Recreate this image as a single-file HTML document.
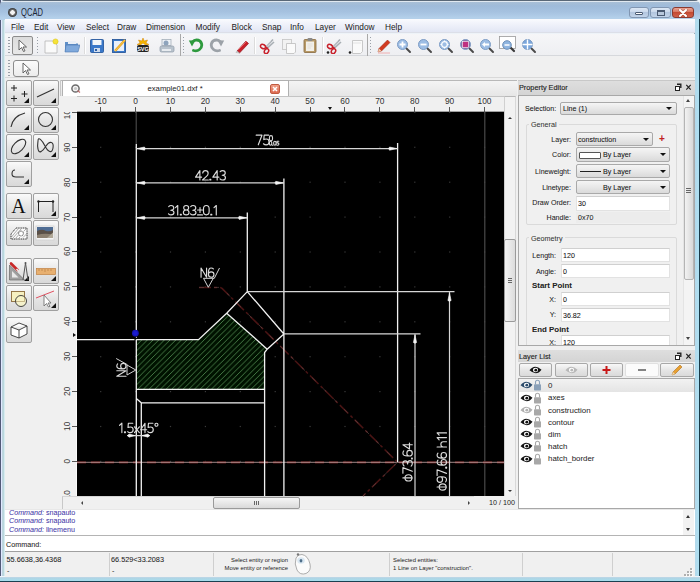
<!DOCTYPE html>
<html><head><meta charset="utf-8"><style>
*{margin:0;padding:0;box-sizing:border-box}
html,body{width:700px;height:582px;overflow:hidden;background:#bcd3ec;font-family:"Liberation Sans",sans-serif;color:#000}
.a{position:absolute}
.t{position:absolute;white-space:nowrap;line-height:1}
.mi{position:absolute;top:22.5px;font-size:8.3px;color:#1a1a1a;line-height:1;white-space:nowrap}
.btn{position:absolute;width:26px;height:26px;border:1px solid #a0a0a0;border-radius:2px;background:linear-gradient(#fafafa,#e4e4e4 55%,#d9d9d9)}
.btn i{position:absolute;right:2px;bottom:2px;width:0;height:0;border-left:5px solid transparent;border-bottom:5px solid #111}
.cb{position:absolute;border:1px solid #a9a9a9;border-radius:2px;background:linear-gradient(#f5f5f5,#e8e8e8 50%,#dadada)}
.cb b{position:absolute;right:3.5px;top:5px;width:0;height:0;border-left:3px solid transparent;border-right:3px solid transparent;border-top:3px solid #111}
.inp{position:absolute;background:#fff;border:1px solid #e2e2e2;border-top-color:#d0d0d0}
.lbl{position:absolute;font-size:7.1px;color:#111;line-height:1;white-space:nowrap;margin-top:0.7px;-webkit-text-stroke:0.05px currentColor}
</style></head><body>
<div class="a" style="left:0;top:0;width:700px;height:582px;background:linear-gradient(90deg,#525a78 0 1px,#e0e8ff 1px 2px,#c0d4e0 2px,#b8d8dc 4px,#d8ecf0 4.5px,#eef3f8 5.5px)"></div>
<div class="a" style="left:0;top:0;width:700px;height:20px;background:linear-gradient(#5a6878 0 1px,#e0e8f0 1px 2px,#a9bfd6 2px,#9fbbda 6px,#a6c2e0 12px,#b4d0ea 18px);border-radius:5px 5px 0 0"></div>
<div class="a" style="left:694px;top:19px;width:6px;height:563px;background:linear-gradient(90deg,#9aaab8 0 1px,#b4d8ea 1px,#aee0f2 4.5px,#1a3a48 5px)"></div>
<div class="a" style="left:0;top:576px;width:700px;height:6px;background:linear-gradient(#eef4fa 0 0.5px,#c4d8e8 1px,#b0d4e4 2px,#a8dcec 4.5px,#1a4050 5px)"></div>
<div class="a" style="left:8px;top:8px;width:9px;height:9px;border-radius:50%;background:radial-gradient(circle at 50% 50%,#f4f4f4 0 2px,#7a7a7a 2.5px,#303030 4.5px)"></div>
<div class="t" style="left:21px;top:7.5px;font-size:10px;color:#1b2433;transform:scaleX(0.76);transform-origin:0 0">QCAD</div>
<div class="a" style="left:628.5px;top:7px;width:20px;height:11px;border:1px solid #8196b2;border-radius:3px;background:linear-gradient(#dce7f4,#c9d8ec 45%,#b3c6df 50%,#c2d4ea)"></div>
<div class="a" style="left:634.5px;top:12px;width:8px;height:3px;background:#fff;border:1px solid #4a5a72;border-radius:1px"></div>
<div class="a" style="left:650px;top:7px;width:20.5px;height:11px;border:1px solid #8196b2;border-radius:3px;background:linear-gradient(#dce7f4,#c9d8ec 45%,#b3c6df 50%,#c2d4ea)"></div>
<div class="a" style="left:656.5px;top:9.5px;width:8px;height:6px;border:1px solid #4a5a72;border-top-width:2px;background:#fff;box-shadow:inset 0 0 0 1px #fff"></div>
<div class="a" style="left:657.5px;top:11.5px;width:6px;height:3px;background:#b8c8dc"></div>
<div class="a" style="left:672px;top:7px;width:21.5px;height:11px;border:1px solid #8a3a30;border-radius:3px;background:linear-gradient(#eaa494,#d7735e 45%,#c44a32 50%,#d0604a)"></div>
<svg class="a" style="left:678px;top:8.5px" width="10" height="8" viewBox="0 0 10 8"><path d="M2 1 L8 7 M8 1 L2 7" stroke="#4a1810" stroke-width="3" stroke-linecap="round" opacity="0.35"/><path d="M2 1 L8 7 M8 1 L2 7" stroke="#fff" stroke-width="2" stroke-linecap="round"/></svg>
<div class="a" style="left:5px;top:19px;width:690px;height:14px;background:linear-gradient(#fafbfe,#f2f4fb 30%,#e2e6f4);border-bottom:1px solid #dcdfe8"></div>
<div class="mi" style="left:11px">File</div>
<div class="mi" style="left:34px">Edit</div>
<div class="mi" style="left:57px">View</div>
<div class="mi" style="left:86px">Select</div>
<div class="mi" style="left:117px">Draw</div>
<div class="mi" style="left:146px">Dimension</div>
<div class="mi" style="left:195.5px">Modify</div>
<div class="mi" style="left:231.5px">Block</div>
<div class="mi" style="left:262px">Snap</div>
<div class="mi" style="left:290px">Info</div>
<div class="mi" style="left:315px">Layer</div>
<div class="mi" style="left:345px">Window</div>
<div class="mi" style="left:385px">Help</div>
<div class="a" style="left:5px;top:34px;width:690px;height:22px;background:linear-gradient(#f6f6f8,#eeeff2);border-bottom:1px solid #d6d8dc"></div>
<div class="a" style="left:8px;top:37px;width:2px;height:17px;background:repeating-linear-gradient(#9aa0a8 0 1px,transparent 1px 3px)"></div>
<div class="a" style="left:12px;top:36px;width:21px;height:19px;border:1px solid #8c8c8c;border-radius:2px;background:linear-gradient(#dcdcdc,#e8e8e8)"></div>
<svg class="a" style="left:17px;top:39px" width="12" height="14" viewBox="0 0 12 14"><path d="M2 1 L2 11 L4.5 8.5 L6.5 12.5 L8 11.8 L6 8 L9.5 8 Z" fill="#fff" stroke="#555" stroke-width="0.9"/></svg>
<div class="a" style="left:37px;top:37px;width:1px;height:17px;background:repeating-linear-gradient(#9aa0a8 0 1px,transparent 1px 3px)"></div>
<div class="a" style="left:84px;top:37px;width:1px;height:17px;background:#dcdcdc;box-shadow:1px 0 0 #fff"></div>
<div class="a" style="left:254px;top:37px;width:1px;height:17px;background:#dcdcdc;box-shadow:1px 0 0 #fff"></div>
<div class="a" style="left:322px;top:37px;width:1px;height:17px;background:#dcdcdc;box-shadow:1px 0 0 #fff"></div>
<div class="a" style="left:179.5px;top:34px;width:1px;height:22px;background:#a8a8a8"></div>
<div class="a" style="left:183.0px;top:37px;width:1px;height:17px;background:repeating-linear-gradient(#9aa0a8 0 1px,transparent 1px 3px)"></div>
<div class="a" style="left:366.5px;top:34px;width:1px;height:22px;background:#a8a8a8"></div>
<div class="a" style="left:370.0px;top:37px;width:1px;height:17px;background:repeating-linear-gradient(#9aa0a8 0 1px,transparent 1px 3px)"></div>
<div class="a" style="left:5px;top:56px;width:690px;height:22px;background:#f0f0f0;border-bottom:1px solid #d9d9d9"></div>
<div class="a" style="left:8px;top:60px;width:2px;height:17px;background:repeating-linear-gradient(#9aa0a8 0 1px,transparent 1px 3px)"></div>
<div class="a" style="left:13px;top:60px;width:26px;height:17px;border:1px solid #8c8c8c;border-radius:3px;background:linear-gradient(#fbfbfb,#ececec)"></div>
<svg class="a" style="left:21px;top:62px" width="12" height="14" viewBox="0 0 12 14"><path d="M2 1 L2 11 L4.5 8.5 L6.5 12.5 L8 11.8 L6 8 L9.5 8 Z" fill="#fff" stroke="#555" stroke-width="0.9"/></svg>
<div class="a" style="left:5px;top:78px;width:690px;height:473px;background:#f0f0f0"></div>
<svg class="a" style="left:43px;top:38px" width="16" height="16" viewBox="0 0 16 16"><path d="M2 3 H10 L14 7 V15 H2 Z" fill="#fafafa" stroke="#b5b5b5" stroke-width="0.8"/><circle cx="12.5" cy="3.5" r="2.6" fill="#f5e23a" stroke="#d8c010" stroke-width="0.5"/></svg>
<svg class="a" style="left:64px;top:38px" width="16" height="16" viewBox="0 0 16 16"><path d="M1 4 H6 L7.5 5.5 H14 V14 H1 Z" fill="#5f8fc8"/><path d="M2 7 H16 L14 14 H1 Z" fill="#7fa9dc" stroke="#4b77b0" stroke-width="0.6"/><path d="M4 3 H12 V6 H4Z" fill="#e8eef6"/></svg>
<svg class="a" style="left:89px;top:38px" width="16" height="16" viewBox="0 0 16 16"><rect x="1.5" y="1.5" width="13" height="13" rx="1" fill="#3a78c9" stroke="#1d4f95" stroke-width="0.8"/><rect x="3.5" y="2" width="9" height="5" fill="#f3f6fa"/><rect x="5" y="10" width="6" height="4" fill="#cfdcee"/><rect x="6" y="11" width="2" height="2" fill="#2b5ea6"/></svg>
<svg class="a" style="left:111px;top:38px" width="16" height="16" viewBox="0 0 16 16"><rect x="1.5" y="1.5" width="13" height="13" fill="#3a78c9" stroke="#1d4f95" stroke-width="0.8"/><rect x="3" y="3" width="10" height="10" fill="#e9f0fa"/><path d="M4 13 L14 2" stroke="#e8a020" stroke-width="2.4"/><path d="M4 13 L14 2" stroke="#f8d050" stroke-width="1"/></svg>
<svg class="a" style="left:135px;top:37px" width="16" height="16" viewBox="0 0 16 16"><path d="M8 1 L9.2 4 L12.5 3 L11 6 L14 7.5 L10.5 8 L8 6 L5.5 8 L2 7.5 L5 6 L3.5 3 L6.8 4Z" fill="#f4b400" stroke="#d08000" stroke-width="0.5"/><rect x="2" y="8" width="12" height="7" rx="2" fill="#222"/><text x="8" y="14" font-size="5.5" font-family="Liberation Sans" font-weight="bold" fill="#fff" text-anchor="middle">SVG</text></svg>
<svg class="a" style="left:159px;top:38px" width="16" height="16" viewBox="0 0 16 16"><rect x="3" y="1.5" width="9" height="6" fill="#eef2f6" stroke="#9aa6b2" stroke-width="0.7"/><circle cx="7" cy="5" r="2.5" fill="#8ea4bc"/><rect x="1" y="8" width="14" height="6" rx="1.5" fill="#b9c3cd" stroke="#8d99a6" stroke-width="0.7"/><rect x="3" y="11" width="9" height="2" fill="#e8ecf0"/></svg>
<svg class="a" style="left:188px;top:37px" width="16" height="16" viewBox="0 0 16 16"><path d="M5.5 13.5 Q9 14.5 11.5 12.5 Q14.5 10 13.5 6.5 Q12.5 3 8.5 3 Q6 3 4.5 5" fill="none" stroke="#2e9a3e" stroke-width="2.8" stroke-linecap="round"/><path d="M0.8 3.5 L7.5 3.2 L4 9.5Z" fill="#2e9a3e"/></svg>
<svg class="a" style="left:209px;top:37px" width="16" height="16" viewBox="0 0 16 16"><g transform="translate(16 0) scale(-1 1)"><path d="M5.5 13.5 Q9 14.5 11.5 12.5 Q14.5 10 13.5 6.5 Q12.5 3 8.5 3 Q6 3 4.5 5" fill="none" stroke="#9ca2a8" stroke-width="2.8" stroke-linecap="round"/><path d="M0.8 3.5 L7.5 3.2 L4 9.5Z" fill="#9ca2a8"/></g></svg>
<svg class="a" style="left:234px;top:38px" width="16" height="16" viewBox="0 0 16 16"><path d="M3 13 L12 3 L14.5 5.5 L5.5 15 Z" fill="#c8202a" stroke="#8a1018" stroke-width="0.6"/><path d="M2 14.5 L3 13 L5.5 15 Z" fill="#f0f0f0" stroke="#999" stroke-width="0.5"/><path d="M4.5 11.5 L13 3" stroke="#f07070" stroke-width="0.8"/></svg>
<svg class="a" style="left:259px;top:38px" width="16" height="16" viewBox="0 0 16 16"><path d="M7 9 L14 1.5 M8.5 10 L15 4" stroke="#a8aeb4" stroke-width="1.6"/><path d="M7 9 L12 3" stroke="#d0d4d8" stroke-width="0.6"/><ellipse cx="4" cy="8.5" rx="2.6" ry="2" transform="rotate(30 4 8.5)" fill="none" stroke="#c8202a" stroke-width="1.5"/><ellipse cx="7.5" cy="13.2" rx="2" ry="2.6" transform="rotate(30 7.5 13.2)" fill="none" stroke="#c8202a" stroke-width="1.5"/><path d="M6.3 9.3 L8 9.5 L8.3 11" fill="none" stroke="#c8202a" stroke-width="1.3"/></svg>
<svg class="a" style="left:281px;top:38px" width="16" height="16" viewBox="0 0 16 16"><rect x="1.5" y="1.5" width="9" height="10" fill="#f2f2f2" stroke="#c4c4c4" stroke-width="0.8"/><path d="M5.5 5.5 H14.5 V14 L13 15.5 H5.5 Z" fill="#fafafa" stroke="#bdbdbd" stroke-width="0.8"/></svg>
<svg class="a" style="left:302px;top:37px" width="16" height="16" viewBox="0 0 16 16"><rect x="2" y="2.5" width="12" height="13" rx="1" fill="#b89a68" stroke="#86683e" stroke-width="0.8"/><rect x="4" y="4.5" width="8" height="9.5" fill="#f2f0ea"/><path d="M5.5 7H10.5M5.5 9H10.5M5.5 11H9" stroke="#d8d4cc" stroke-width="0.6"/><rect x="5.5" y="1" width="5" height="3" rx="1" fill="#8a8a8a"/></svg>
<svg class="a" style="left:326px;top:38px" width="16" height="16" viewBox="0 0 16 16"><path d="M7 9 L14 1.5 M8.5 10 L15 4" stroke="#a8aeb4" stroke-width="1.6"/><path d="M7 9 L12 3" stroke="#d0d4d8" stroke-width="0.6"/><ellipse cx="4" cy="8.5" rx="2.6" ry="2" transform="rotate(30 4 8.5)" fill="none" stroke="#c8202a" stroke-width="1.5"/><ellipse cx="7.5" cy="13.2" rx="2" ry="2.6" transform="rotate(30 7.5 13.2)" fill="none" stroke="#c8202a" stroke-width="1.5"/><path d="M6.3 9.3 L8 9.5 L8.3 11" fill="none" stroke="#c8202a" stroke-width="1.3"/><circle cx="2" cy="14.5" r="1.3" fill="#222"/></svg>
<svg class="a" style="left:348px;top:38px" width="16" height="16" viewBox="0 0 16 16"><path d="M4.5 2.5 H14.5 V13.5 L12.5 15.5 H4.5 Z" fill="#fafafa" stroke="#bdbdbd" stroke-width="0.8"/><path d="M5 5 H13" stroke="#e2e2e2"/><circle cx="2" cy="14.5" r="1.3" fill="#222"/></svg>
<svg class="a" style="left:376px;top:38px" width="16" height="16" viewBox="0 0 16 16"><path d="M2 14 L3 10.5 L11.5 2 L14 4.5 L5.5 13 Z" fill="#d23a20" stroke="#902010" stroke-width="0.5"/><path d="M2 14 L3 10.5 L5.5 13Z" fill="#f2d2b0"/><path d="M2 15 H14" stroke="#f0a0a0" stroke-width="0.8"/></svg>
<svg class="a" style="left:396px;top:38px" width="16" height="16" viewBox="0 0 16 16"><path d="M10 10 L14 14" stroke="#4a4a4a" stroke-width="2" stroke-linecap="round"/><circle cx="6.5" cy="6.5" r="5" fill="#9dbde4" stroke="#7d9cc4" stroke-width="1"/><path d="M6.5 3.5 V9.5 M3.5 6.5 H9.5" stroke="#fff" stroke-width="1.8"/></svg>
<svg class="a" style="left:417px;top:38px" width="16" height="16" viewBox="0 0 16 16"><path d="M10 10 L14 14" stroke="#4a4a4a" stroke-width="2" stroke-linecap="round"/><circle cx="6.5" cy="6.5" r="5" fill="#9dbde4" stroke="#7d9cc4" stroke-width="1"/><path d="M3.5 6.5 H9.5" stroke="#fff" stroke-width="1.8"/></svg>
<svg class="a" style="left:438px;top:38px" width="16" height="16" viewBox="0 0 16 16"><path d="M10 10 L14 14" stroke="#4a4a4a" stroke-width="2" stroke-linecap="round"/><circle cx="6.5" cy="6.5" r="5" fill="#9dbde4" stroke="#7d9cc4" stroke-width="1"/><circle cx="6.5" cy="6.5" r="2.8" fill="none" stroke="#fff" stroke-width="1.2"/><path d="M6.5 2.5V4M6.5 9V10.5M2.5 6.5H4M9 6.5H10.5" stroke="#fff" stroke-width="1"/></svg>
<svg class="a" style="left:459px;top:38px" width="16" height="16" viewBox="0 0 16 16"><path d="M10 10 L14 14" stroke="#4a4a4a" stroke-width="2" stroke-linecap="round"/><circle cx="6.5" cy="6.5" r="5" fill="#8d70a8" stroke="#7d9cc4" stroke-width="1"/><rect x="3.5" y="3.5" width="6" height="6" fill="#c03080" stroke="#fff" stroke-width="0.6"/></svg>
<svg class="a" style="left:479px;top:38px" width="16" height="16" viewBox="0 0 16 16"><path d="M10 10 L14 14" stroke="#4a4a4a" stroke-width="2" stroke-linecap="round"/><circle cx="6.5" cy="6.5" r="5" fill="#9dbde4" stroke="#7d9cc4" stroke-width="1"/><path d="M3 6.5 L6 4 V9 Z M6 5.5 H10 V7.5 H6Z" fill="#fff"/></svg>
<svg class="a" style="left:499px;top:36px" width="17" height="17" viewBox="0 0 17 17"><rect x="0.5" y="0.5" width="16" height="12" fill="#fff" stroke="#9a9a9a" stroke-width="0.8"/><path d="M11 11 L15 15" stroke="#3a3a3a" stroke-width="2.2" stroke-linecap="round"/><circle cx="8" cy="9" r="4.3" fill="#8fb5e0" stroke="#6d8fb8" stroke-width="1"/><path d="M5.5 9 H10.5" stroke="#fff" stroke-width="1.5"/></svg>
<svg class="a" style="left:521px;top:38px" width="16" height="16" viewBox="0 0 16 16"><path d="M10 10 L14 14" stroke="#4a4a4a" stroke-width="2" stroke-linecap="round"/><circle cx="6.5" cy="6.5" r="5" fill="#7aa6dc" stroke="#7d9cc4" stroke-width="1"/><path d="M6.5 1.5 V11.5 M1.5 6.5 H11.5" stroke="#fff" stroke-width="1.4"/></svg>
<div class="btn" style="left:6px;top:80px;width:26px;height:26px"><i></i></div>
<svg class="a" style="left:6px;top:80px" width="26" height="26" viewBox="0 0 26 26"><path d="M8 5V11M5 8H11 M18.5 11V17M15.5 14H21.5 M8 15.5V21.5M5 18.5H11" stroke="#222" stroke-width="1"/></svg>
<div class="btn" style="left:33px;top:80px;width:26px;height:26px"><i></i></div>
<svg class="a" style="left:33px;top:80px" width="26" height="26" viewBox="0 0 26 26"><path d="M4 17 L21 9" stroke="#333" stroke-width="1.1"/></svg>
<div class="btn" style="left:6px;top:107px;width:26px;height:26px"><i></i></div>
<svg class="a" style="left:6px;top:107px" width="26" height="26" viewBox="0 0 26 26"><path d="M5 20 Q7 9 19 6" fill="none" stroke="#333" stroke-width="1.1"/></svg>
<div class="btn" style="left:33px;top:107px;width:26px;height:26px"><i></i></div>
<svg class="a" style="left:33px;top:107px" width="26" height="26" viewBox="0 0 26 26"><circle cx="12.5" cy="12.5" r="7" fill="none" stroke="#333" stroke-width="1.1"/></svg>
<div class="btn" style="left:6px;top:134px;width:26px;height:26px"><i></i></div>
<svg class="a" style="left:6px;top:134px" width="26" height="26" viewBox="0 0 26 26"><ellipse cx="12.5" cy="12.5" rx="9" ry="4.8" transform="rotate(-45 12.5 12.5)" fill="none" stroke="#333" stroke-width="1.1"/></svg>
<div class="btn" style="left:33px;top:134px;width:26px;height:26px"><i></i></div>
<svg class="a" style="left:33px;top:134px" width="26" height="26" viewBox="0 0 26 26"><path d="M5 7 C5 2 9 6 12 12 C15 18 19 20 20 14 C21 8 17 6 13 12 C9 18 6 20 5 15 C4 11 5 9 5 7Z" fill="none" stroke="#333" stroke-width="1.1"/></svg>
<div class="btn" style="left:6px;top:161px;width:26px;height:26px"><i></i></div>
<svg class="a" style="left:6px;top:161px" width="26" height="26" viewBox="0 0 26 26"><path d="M9 9 Q6 9 6 13 Q6 16 10 16 H18" fill="none" stroke="#333" stroke-width="1.1"/></svg>
<div class="btn" style="left:6px;top:193px;width:26px;height:26px"></div>
<svg class="a" style="left:6px;top:193px" width="26" height="26" viewBox="0 0 26 26"><text x="12.5" y="20" font-family="Liberation Serif" font-size="20" text-anchor="middle" fill="#111">A</text></svg>
<div class="btn" style="left:33px;top:193px;width:26px;height:26px"><i></i></div>
<svg class="a" style="left:33px;top:193px" width="26" height="26" viewBox="0 0 26 26"><path d="M5.5 8.5 V19 M20 8.5 V19 M5.5 8.5 H20" stroke="#222" stroke-width="1"/><circle cx="5.5" cy="8.5" r="1.2" fill="#222"/><circle cx="20" cy="8.5" r="1.2" fill="#222"/></svg>
<div class="btn" style="left:6px;top:220px;width:26px;height:26px"></div>
<svg class="a" style="left:6px;top:220px" width="26" height="26" viewBox="0 0 26 26"><path d="M5 19 V14 L10 8 H21 V19 Z" fill="#fafafa" stroke="#222" stroke-width="0.9" stroke-dasharray="1.2 0.6"/><path d="M5.5 17 L12.5 8.5 M6.5 18.5 L15.5 8.5 M9.5 18.5 L12.5 15 M17.5 11.5 L20.5 8.5 M12.5 18.5 L14 17 M17 17.5 L20.5 14" stroke="#777" stroke-width="0.6"/><circle cx="15" cy="13.5" r="2.4" fill="#fff" stroke="#222" stroke-width="0.8" stroke-dasharray="1 0.5"/></svg>
<div class="btn" style="left:33px;top:220px;width:26px;height:26px"></div>
<svg class="a" style="left:33px;top:220px" width="26" height="26" viewBox="0 0 26 26"><rect x="3" y="6" width="18" height="14" fill="#f4f4f4" stroke="#c8c8c8" stroke-width="0.6"/><rect x="4" y="7" width="16" height="11" fill="#4f6d94"/><path d="M4 11 Q9 8.5 13 11 Q17 12 20 10 V18 H4Z" fill="#5a5048"/><path d="M4 15 Q11 13 20 14.5 V18 H4Z" fill="#8c8070"/><path d="M14 18 L20 12.5 V18Z" fill="#b0a898"/></svg>
<div class="btn" style="left:6px;top:258px;width:26px;height:26px"><i></i></div>
<svg class="a" style="left:6px;top:258px" width="26" height="26" viewBox="0 0 26 26"><path d="M3.5 22 V7 L18.5 22Z" fill="#a0a0a0" stroke="#6a6a6a" stroke-width="0.7"/><path d="M6 19.5 V13 L12.5 19.5Z" fill="#e8e8e8"/><path d="M5 5.5 L11.5 12" stroke="#c82828" stroke-width="2.6" stroke-linecap="round"/><path d="M10.5 11 L13 13.5" stroke="#eee" stroke-width="1.6"/><path d="M17 22 L19.5 5 L22 22" fill="none" stroke="#555" stroke-width="1"/><circle cx="19.5" cy="5" r="1" fill="#555"/></svg>
<div class="btn" style="left:33px;top:258px;width:26px;height:26px"><i></i></div>
<svg class="a" style="left:33px;top:258px" width="26" height="26" viewBox="0 0 26 26"><rect x="3.5" y="10.5" width="19" height="6" fill="#e8b070" stroke="#c08040" stroke-width="0.7"/><path d="M6 11V13M9 11V13M12 11V14M15 11V13M18 11V13" stroke="#a06a30" stroke-width="0.5"/></svg>
<div class="btn" style="left:6px;top:285px;width:26px;height:26px"></div>
<svg class="a" style="left:6px;top:285px" width="26" height="26" viewBox="0 0 26 26"><rect x="5.5" y="6.5" width="13" height="10" fill="#f6f0c0" stroke="#8a6a3a" stroke-width="0.9"/><circle cx="15" cy="16" r="5.5" fill="#f8f4c8" fill-opacity="0.85" stroke="#333" stroke-width="0.9"/><path d="M9.5 16.5 H18.5 V11" fill="none" stroke="#8a6a3a" stroke-width="0.6" opacity="0.6"/></svg>
<div class="btn" style="left:33px;top:285px;width:26px;height:26px"><i></i></div>
<svg class="a" style="left:33px;top:285px" width="26" height="26" viewBox="0 0 26 26"><path d="M3 13 L21 6" stroke="#e05060" stroke-width="1"/><path d="M11 10 L11 21 L13.5 18.5 L15.5 22 L17 21.3 L15 18 L18 18Z" fill="#fff" stroke="#666" stroke-width="0.8"/></svg>
<div class="btn" style="left:6px;top:317px;width:26px;height:26px"></div>
<svg class="a" style="left:6px;top:317px" width="26" height="26" viewBox="0 0 26 26"><path d="M5 10 L13 6 L21 9 L21 17 L13 21 L5 18Z M5 10 L13 13 L21 9 M13 13 V21" fill="#fff" stroke="#333" stroke-width="0.9"/></svg>
<div class="a" style="left:60px;top:80px;width:1px;height:16px;background:#c8c8c8"></div>
<div class="a" style="left:61px;top:80px;width:456px;height:16px;background:linear-gradient(#f4f4f4,#e6e6e6);border-top:1px solid #b8b8b8"></div>
<div class="a" style="left:62px;top:80px;width:227px;height:17px;background:#fff;border:1px solid #b0b0b0;border-bottom:none"></div>
<svg class="a" style="left:71px;top:84px" width="10" height="9" viewBox="0 0 10 9"><circle cx="4.5" cy="4.5" r="3.6" fill="#f4f4f4" stroke="#6a6a6a" stroke-width="1.5"/><circle cx="4.5" cy="4.5" r="1.6" fill="#c8c8c8"/><path d="M6.5 6.5 L9 8.5" stroke="#c07070" stroke-width="1.2"/></svg>
<div class="t" style="left:147.5px;top:85px;font-size:7.7px;color:#222">example01.dxf *</div>
<div class="a" style="left:270px;top:84px;width:10px;height:10px;border-radius:2px;background:linear-gradient(#f0a088,#dc6a50);border:1px solid #c05a40"></div>
<svg class="a" style="left:270px;top:84px" width="10" height="10"><path d="M3 3L7 7M7 3L3 7" stroke="#fff" stroke-width="1.5"/></svg>
<div class="a" style="left:62px;top:96px;width:442px;height:16px;background:#f0f0f0;border-top:1px solid #c4c4c4"></div>
<div class="a" style="left:62px;top:96px;width:15px;height:400px;background:#f0f0f0"></div>
<div class="a" style="left:77px;top:111px;width:427px;height:1px;background:#a0a0a0"></div>
<div class="a" style="left:76px;top:112px;width:1px;height:384px;background:#fafafa"></div>
<div class="a" style="left:100.1px;top:107px;width:1px;height:5px;background:#555"></div>
<div class="t" style="left:80.6px;width:40px;text-align:center;top:96.8px;font-size:8.4px;color:#333">-10</div>
<div class="a" style="left:135.0px;top:107px;width:1px;height:5px;background:#555"></div>
<div class="t" style="left:115.5px;width:40px;text-align:center;top:96.8px;font-size:8.4px;color:#333">0</div>
<div class="a" style="left:169.9px;top:107px;width:1px;height:5px;background:#555"></div>
<div class="t" style="left:150.4px;width:40px;text-align:center;top:96.8px;font-size:8.4px;color:#333">10</div>
<div class="a" style="left:204.8px;top:107px;width:1px;height:5px;background:#555"></div>
<div class="t" style="left:185.3px;width:40px;text-align:center;top:96.8px;font-size:8.4px;color:#333">20</div>
<div class="a" style="left:239.7px;top:107px;width:1px;height:5px;background:#555"></div>
<div class="t" style="left:220.2px;width:40px;text-align:center;top:96.8px;font-size:8.4px;color:#333">30</div>
<div class="a" style="left:274.6px;top:107px;width:1px;height:5px;background:#555"></div>
<div class="t" style="left:255.1px;width:40px;text-align:center;top:96.8px;font-size:8.4px;color:#333">40</div>
<div class="a" style="left:309.5px;top:107px;width:1px;height:5px;background:#555"></div>
<div class="t" style="left:290.0px;width:40px;text-align:center;top:96.8px;font-size:8.4px;color:#333">50</div>
<div class="a" style="left:344.4px;top:107px;width:1px;height:5px;background:#555"></div>
<div class="t" style="left:324.9px;width:40px;text-align:center;top:96.8px;font-size:8.4px;color:#333">60</div>
<div class="a" style="left:379.3px;top:107px;width:1px;height:5px;background:#555"></div>
<div class="t" style="left:359.8px;width:40px;text-align:center;top:96.8px;font-size:8.4px;color:#333">70</div>
<div class="a" style="left:414.2px;top:107px;width:1px;height:5px;background:#555"></div>
<div class="t" style="left:394.7px;width:40px;text-align:center;top:96.8px;font-size:8.4px;color:#333">80</div>
<div class="a" style="left:449.1px;top:107px;width:1px;height:5px;background:#555"></div>
<div class="t" style="left:429.6px;width:40px;text-align:center;top:96.8px;font-size:8.4px;color:#333">90</div>
<div class="a" style="left:484.0px;top:107px;width:1px;height:5px;background:#555"></div>
<div class="t" style="left:464.5px;width:40px;text-align:center;top:96.8px;font-size:8.4px;color:#333">100</div>
<div class="a" style="left:328px;top:107px;width:0;height:0;border-left:2px solid transparent;border-right:2px solid transparent;border-top:3px solid #111"></div>
<div class="a" style="left:72px;top:495.7px;width:5px;height:1px;background:#555"></div>
<div class="t" style="left:47px;top:491.7px;width:40px;text-align:center;font-size:8.4px;color:#333;transform:rotate(-90deg)">-10</div>
<div class="a" style="left:72px;top:460.8px;width:5px;height:1px;background:#555"></div>
<div class="t" style="left:47px;top:456.8px;width:40px;text-align:center;font-size:8.4px;color:#333;transform:rotate(-90deg)">0</div>
<div class="a" style="left:72px;top:425.9px;width:5px;height:1px;background:#555"></div>
<div class="t" style="left:47px;top:421.9px;width:40px;text-align:center;font-size:8.4px;color:#333;transform:rotate(-90deg)">10</div>
<div class="a" style="left:72px;top:391.0px;width:5px;height:1px;background:#555"></div>
<div class="t" style="left:47px;top:387.0px;width:40px;text-align:center;font-size:8.4px;color:#333;transform:rotate(-90deg)">20</div>
<div class="a" style="left:72px;top:356.1px;width:5px;height:1px;background:#555"></div>
<div class="t" style="left:47px;top:352.1px;width:40px;text-align:center;font-size:8.4px;color:#333;transform:rotate(-90deg)">30</div>
<div class="a" style="left:72px;top:321.2px;width:5px;height:1px;background:#555"></div>
<div class="t" style="left:47px;top:317.2px;width:40px;text-align:center;font-size:8.4px;color:#333;transform:rotate(-90deg)">40</div>
<div class="a" style="left:72px;top:286.3px;width:5px;height:1px;background:#555"></div>
<div class="t" style="left:47px;top:282.3px;width:40px;text-align:center;font-size:8.4px;color:#333;transform:rotate(-90deg)">50</div>
<div class="a" style="left:72px;top:251.4px;width:5px;height:1px;background:#555"></div>
<div class="t" style="left:47px;top:247.4px;width:40px;text-align:center;font-size:8.4px;color:#333;transform:rotate(-90deg)">60</div>
<div class="a" style="left:72px;top:216.5px;width:5px;height:1px;background:#555"></div>
<div class="t" style="left:47px;top:212.5px;width:40px;text-align:center;font-size:8.4px;color:#333;transform:rotate(-90deg)">70</div>
<div class="a" style="left:72px;top:181.6px;width:5px;height:1px;background:#555"></div>
<div class="t" style="left:47px;top:177.6px;width:40px;text-align:center;font-size:8.4px;color:#333;transform:rotate(-90deg)">80</div>
<div class="a" style="left:72px;top:146.7px;width:5px;height:1px;background:#555"></div>
<div class="t" style="left:47px;top:142.7px;width:40px;text-align:center;font-size:8.4px;color:#333;transform:rotate(-90deg)">90</div>
<div class="a" style="left:72px;top:111.8px;width:5px;height:1px;background:#555"></div>
<div class="t" style="left:47px;top:107.8px;width:40px;text-align:center;font-size:8.4px;color:#333;transform:rotate(-90deg)">100</div>
<div class="a" style="left:72.5px;top:332.5px;width:0;height:0;border-top:2px solid transparent;border-bottom:2px solid transparent;border-left:3px solid #111"></div>
<div class="a" style="left:62px;top:96px;width:15px;height:16px;background:#f0f0f0"></div>
<div class="a" style="left:504px;top:96px;width:12px;height:414px;background:#f2f2f2;border-left:1px solid #d0d0d0;border-right:1px solid #d8d8d8;border-top:1px solid #b8b8b8"></div>
<div class="a" style="left:508px;top:117px;width:0;height:0;border-left:2.2px solid transparent;border-right:2.2px solid transparent;border-bottom:2.5px solid #333"></div>
<div class="a" style="left:508px;top:490px;width:0;height:0;border-left:2.2px solid transparent;border-right:2.2px solid transparent;border-top:2.5px solid #333"></div>
<div class="a" style="left:504px;top:239px;width:12px;height:83px;border:1px solid #9a9a9a;border-radius:2px;background:linear-gradient(90deg,#f4f4f4,#dcdcdc)"></div>
<div class="a" style="left:508px;top:278px;width:4px;height:5px;background:repeating-linear-gradient(#666 0 1px,transparent 1px 2px)"></div>
<div class="a" style="left:62px;top:496px;width:442px;height:14px;background:#f0f0f0;border-top:1px solid #d6d6d6;border-left:1px solid #c8c8c8"></div>
<div class="a" style="left:81px;top:500.5px;width:0;height:0;border-top:2px solid transparent;border-bottom:2px solid transparent;border-right:2.5px solid #444"></div>
<div class="a" style="left:468px;top:500.5px;width:0;height:0;border-top:2px solid transparent;border-bottom:2px solid transparent;border-left:2.5px solid #444"></div>
<div class="a" style="left:213px;top:497px;width:87px;height:12px;border:1px solid #9a9a9a;border-radius:2px;background:linear-gradient(#f6f6f6,#dadada)"></div>
<div class="a" style="left:254px;top:501px;width:5px;height:4px;background:repeating-linear-gradient(90deg,#666 0 1px,transparent 1px 2px)"></div>
<div class="a" style="left:474px;top:496px;width:44px;height:14px;background:#f0f0f0"></div>
<div class="t" style="left:489px;top:499px;font-size:7.2px;color:#222">10 / 100</div>
<svg class="a" style="left:0;top:0" width="700" height="582" viewBox="0 0 700 582"><rect x="77" y="112" width="427" height="384" fill="#000"/><rect x="100.1" y="460.8" width="1.2" height="1.2" fill="#3a3a3a"/><rect x="100.1" y="425.9" width="1.2" height="1.2" fill="#3a3a3a"/><rect x="100.1" y="391.0" width="1.2" height="1.2" fill="#3a3a3a"/><rect x="100.1" y="356.1" width="1.2" height="1.2" fill="#3a3a3a"/><rect x="100.1" y="321.2" width="1.2" height="1.2" fill="#3a3a3a"/><rect x="100.1" y="286.3" width="1.2" height="1.2" fill="#3a3a3a"/><rect x="100.1" y="251.4" width="1.2" height="1.2" fill="#3a3a3a"/><rect x="100.1" y="216.5" width="1.2" height="1.2" fill="#3a3a3a"/><rect x="100.1" y="181.6" width="1.2" height="1.2" fill="#3a3a3a"/><rect x="100.1" y="146.7" width="1.2" height="1.2" fill="#3a3a3a"/><rect x="100.1" y="111.8" width="1.2" height="1.2" fill="#3a3a3a"/><rect x="135.0" y="460.8" width="1.2" height="1.2" fill="#3a3a3a"/><rect x="135.0" y="425.9" width="1.2" height="1.2" fill="#3a3a3a"/><rect x="135.0" y="391.0" width="1.2" height="1.2" fill="#3a3a3a"/><rect x="135.0" y="356.1" width="1.2" height="1.2" fill="#3a3a3a"/><rect x="135.0" y="321.2" width="1.2" height="1.2" fill="#3a3a3a"/><rect x="135.0" y="286.3" width="1.2" height="1.2" fill="#3a3a3a"/><rect x="135.0" y="251.4" width="1.2" height="1.2" fill="#3a3a3a"/><rect x="135.0" y="216.5" width="1.2" height="1.2" fill="#3a3a3a"/><rect x="135.0" y="181.6" width="1.2" height="1.2" fill="#3a3a3a"/><rect x="135.0" y="146.7" width="1.2" height="1.2" fill="#3a3a3a"/><rect x="135.0" y="111.8" width="1.2" height="1.2" fill="#3a3a3a"/><rect x="169.9" y="460.8" width="1.2" height="1.2" fill="#3a3a3a"/><rect x="169.9" y="425.9" width="1.2" height="1.2" fill="#3a3a3a"/><rect x="169.9" y="391.0" width="1.2" height="1.2" fill="#3a3a3a"/><rect x="169.9" y="356.1" width="1.2" height="1.2" fill="#3a3a3a"/><rect x="169.9" y="321.2" width="1.2" height="1.2" fill="#3a3a3a"/><rect x="169.9" y="286.3" width="1.2" height="1.2" fill="#3a3a3a"/><rect x="169.9" y="251.4" width="1.2" height="1.2" fill="#3a3a3a"/><rect x="169.9" y="216.5" width="1.2" height="1.2" fill="#3a3a3a"/><rect x="169.9" y="181.6" width="1.2" height="1.2" fill="#3a3a3a"/><rect x="169.9" y="146.7" width="1.2" height="1.2" fill="#3a3a3a"/><rect x="169.9" y="111.8" width="1.2" height="1.2" fill="#3a3a3a"/><rect x="204.8" y="460.8" width="1.2" height="1.2" fill="#3a3a3a"/><rect x="204.8" y="425.9" width="1.2" height="1.2" fill="#3a3a3a"/><rect x="204.8" y="391.0" width="1.2" height="1.2" fill="#3a3a3a"/><rect x="204.8" y="356.1" width="1.2" height="1.2" fill="#3a3a3a"/><rect x="204.8" y="321.2" width="1.2" height="1.2" fill="#3a3a3a"/><rect x="204.8" y="286.3" width="1.2" height="1.2" fill="#3a3a3a"/><rect x="204.8" y="251.4" width="1.2" height="1.2" fill="#3a3a3a"/><rect x="204.8" y="216.5" width="1.2" height="1.2" fill="#3a3a3a"/><rect x="204.8" y="181.6" width="1.2" height="1.2" fill="#3a3a3a"/><rect x="204.8" y="146.7" width="1.2" height="1.2" fill="#3a3a3a"/><rect x="204.8" y="111.8" width="1.2" height="1.2" fill="#3a3a3a"/><rect x="239.7" y="460.8" width="1.2" height="1.2" fill="#3a3a3a"/><rect x="239.7" y="425.9" width="1.2" height="1.2" fill="#3a3a3a"/><rect x="239.7" y="391.0" width="1.2" height="1.2" fill="#3a3a3a"/><rect x="239.7" y="356.1" width="1.2" height="1.2" fill="#3a3a3a"/><rect x="239.7" y="321.2" width="1.2" height="1.2" fill="#3a3a3a"/><rect x="239.7" y="286.3" width="1.2" height="1.2" fill="#3a3a3a"/><rect x="239.7" y="251.4" width="1.2" height="1.2" fill="#3a3a3a"/><rect x="239.7" y="216.5" width="1.2" height="1.2" fill="#3a3a3a"/><rect x="239.7" y="181.6" width="1.2" height="1.2" fill="#3a3a3a"/><rect x="239.7" y="146.7" width="1.2" height="1.2" fill="#3a3a3a"/><rect x="239.7" y="111.8" width="1.2" height="1.2" fill="#3a3a3a"/><rect x="274.6" y="460.8" width="1.2" height="1.2" fill="#3a3a3a"/><rect x="274.6" y="425.9" width="1.2" height="1.2" fill="#3a3a3a"/><rect x="274.6" y="391.0" width="1.2" height="1.2" fill="#3a3a3a"/><rect x="274.6" y="356.1" width="1.2" height="1.2" fill="#3a3a3a"/><rect x="274.6" y="321.2" width="1.2" height="1.2" fill="#3a3a3a"/><rect x="274.6" y="286.3" width="1.2" height="1.2" fill="#3a3a3a"/><rect x="274.6" y="251.4" width="1.2" height="1.2" fill="#3a3a3a"/><rect x="274.6" y="216.5" width="1.2" height="1.2" fill="#3a3a3a"/><rect x="274.6" y="181.6" width="1.2" height="1.2" fill="#3a3a3a"/><rect x="274.6" y="146.7" width="1.2" height="1.2" fill="#3a3a3a"/><rect x="274.6" y="111.8" width="1.2" height="1.2" fill="#3a3a3a"/><rect x="309.5" y="460.8" width="1.2" height="1.2" fill="#3a3a3a"/><rect x="309.5" y="425.9" width="1.2" height="1.2" fill="#3a3a3a"/><rect x="309.5" y="391.0" width="1.2" height="1.2" fill="#3a3a3a"/><rect x="309.5" y="356.1" width="1.2" height="1.2" fill="#3a3a3a"/><rect x="309.5" y="321.2" width="1.2" height="1.2" fill="#3a3a3a"/><rect x="309.5" y="286.3" width="1.2" height="1.2" fill="#3a3a3a"/><rect x="309.5" y="251.4" width="1.2" height="1.2" fill="#3a3a3a"/><rect x="309.5" y="216.5" width="1.2" height="1.2" fill="#3a3a3a"/><rect x="309.5" y="181.6" width="1.2" height="1.2" fill="#3a3a3a"/><rect x="309.5" y="146.7" width="1.2" height="1.2" fill="#3a3a3a"/><rect x="309.5" y="111.8" width="1.2" height="1.2" fill="#3a3a3a"/><rect x="344.4" y="460.8" width="1.2" height="1.2" fill="#3a3a3a"/><rect x="344.4" y="425.9" width="1.2" height="1.2" fill="#3a3a3a"/><rect x="344.4" y="391.0" width="1.2" height="1.2" fill="#3a3a3a"/><rect x="344.4" y="356.1" width="1.2" height="1.2" fill="#3a3a3a"/><rect x="344.4" y="321.2" width="1.2" height="1.2" fill="#3a3a3a"/><rect x="344.4" y="286.3" width="1.2" height="1.2" fill="#3a3a3a"/><rect x="344.4" y="251.4" width="1.2" height="1.2" fill="#3a3a3a"/><rect x="344.4" y="216.5" width="1.2" height="1.2" fill="#3a3a3a"/><rect x="344.4" y="181.6" width="1.2" height="1.2" fill="#3a3a3a"/><rect x="344.4" y="146.7" width="1.2" height="1.2" fill="#3a3a3a"/><rect x="344.4" y="111.8" width="1.2" height="1.2" fill="#3a3a3a"/><rect x="379.3" y="460.8" width="1.2" height="1.2" fill="#3a3a3a"/><rect x="379.3" y="425.9" width="1.2" height="1.2" fill="#3a3a3a"/><rect x="379.3" y="391.0" width="1.2" height="1.2" fill="#3a3a3a"/><rect x="379.3" y="356.1" width="1.2" height="1.2" fill="#3a3a3a"/><rect x="379.3" y="321.2" width="1.2" height="1.2" fill="#3a3a3a"/><rect x="379.3" y="286.3" width="1.2" height="1.2" fill="#3a3a3a"/><rect x="379.3" y="251.4" width="1.2" height="1.2" fill="#3a3a3a"/><rect x="379.3" y="216.5" width="1.2" height="1.2" fill="#3a3a3a"/><rect x="379.3" y="181.6" width="1.2" height="1.2" fill="#3a3a3a"/><rect x="379.3" y="146.7" width="1.2" height="1.2" fill="#3a3a3a"/><rect x="379.3" y="111.8" width="1.2" height="1.2" fill="#3a3a3a"/><rect x="414.2" y="460.8" width="1.2" height="1.2" fill="#3a3a3a"/><rect x="414.2" y="425.9" width="1.2" height="1.2" fill="#3a3a3a"/><rect x="414.2" y="391.0" width="1.2" height="1.2" fill="#3a3a3a"/><rect x="414.2" y="356.1" width="1.2" height="1.2" fill="#3a3a3a"/><rect x="414.2" y="321.2" width="1.2" height="1.2" fill="#3a3a3a"/><rect x="414.2" y="286.3" width="1.2" height="1.2" fill="#3a3a3a"/><rect x="414.2" y="251.4" width="1.2" height="1.2" fill="#3a3a3a"/><rect x="414.2" y="216.5" width="1.2" height="1.2" fill="#3a3a3a"/><rect x="414.2" y="181.6" width="1.2" height="1.2" fill="#3a3a3a"/><rect x="414.2" y="146.7" width="1.2" height="1.2" fill="#3a3a3a"/><rect x="414.2" y="111.8" width="1.2" height="1.2" fill="#3a3a3a"/><rect x="449.1" y="460.8" width="1.2" height="1.2" fill="#3a3a3a"/><rect x="449.1" y="425.9" width="1.2" height="1.2" fill="#3a3a3a"/><rect x="449.1" y="391.0" width="1.2" height="1.2" fill="#3a3a3a"/><rect x="449.1" y="356.1" width="1.2" height="1.2" fill="#3a3a3a"/><rect x="449.1" y="321.2" width="1.2" height="1.2" fill="#3a3a3a"/><rect x="449.1" y="286.3" width="1.2" height="1.2" fill="#3a3a3a"/><rect x="449.1" y="251.4" width="1.2" height="1.2" fill="#3a3a3a"/><rect x="449.1" y="216.5" width="1.2" height="1.2" fill="#3a3a3a"/><rect x="449.1" y="181.6" width="1.2" height="1.2" fill="#3a3a3a"/><rect x="449.1" y="146.7" width="1.2" height="1.2" fill="#3a3a3a"/><rect x="449.1" y="111.8" width="1.2" height="1.2" fill="#3a3a3a"/><rect x="484.0" y="460.8" width="1.2" height="1.2" fill="#3a3a3a"/><rect x="484.0" y="425.9" width="1.2" height="1.2" fill="#3a3a3a"/><rect x="484.0" y="391.0" width="1.2" height="1.2" fill="#3a3a3a"/><rect x="484.0" y="356.1" width="1.2" height="1.2" fill="#3a3a3a"/><rect x="484.0" y="321.2" width="1.2" height="1.2" fill="#3a3a3a"/><rect x="484.0" y="286.3" width="1.2" height="1.2" fill="#3a3a3a"/><rect x="484.0" y="251.4" width="1.2" height="1.2" fill="#3a3a3a"/><rect x="484.0" y="216.5" width="1.2" height="1.2" fill="#3a3a3a"/><rect x="484.0" y="181.6" width="1.2" height="1.2" fill="#3a3a3a"/><rect x="484.0" y="146.7" width="1.2" height="1.2" fill="#3a3a3a"/><rect x="484.0" y="111.8" width="1.2" height="1.2" fill="#3a3a3a"/><line x1="136.2" y1="112" x2="136.2" y2="144" stroke="#555" stroke-width="1"/><line x1="484.8" y1="112" x2="484.8" y2="496" stroke="#4a4a4a" stroke-width="1.2"/><line x1="77" y1="462.3" x2="504" y2="462.3" stroke="#5a1a1a" stroke-width="2.2" stroke-dasharray="9 5"/><line x1="77" y1="462.3" x2="504" y2="462.3" stroke="#c8a8a8" stroke-width="0.8"/><path d="M199 287.4 H219 Q221 287.4 222 288.4 L397.5 462.2 L363 496" fill="none" stroke="#4a1414" stroke-width="1.5" stroke-dasharray="12 3 3 3"/><path d="M199 287.4 H219 Q221 287.4 222 288.4 L397.5 462.2 L363 496" fill="none" stroke="#6a5050" stroke-width="0.6" stroke-dasharray="5 10"/><defs><pattern id="hp" patternUnits="userSpaceOnUse" width="5.67" height="5.67" patternTransform="translate(136,340)"><rect width="5.67" height="5.67" fill="#001200"/><path d="M-1 6.67 L6.67 -1" stroke="#60a060" stroke-width="0.7"/></pattern><clipPath id="cc"><rect x="77" y="112" width="427" height="384"/></clipPath></defs><g clip-path="url(#cc)"><path d="M136.3 339.7 H198.5 L226.7 313.2 L267.2 349.2 L264.6 352.5 V389.3 H136.3 Z" fill="url(#hp)"/><path d="M136.3 144 V331 M136.3 339.2 V496 M77 339.7 H134.5 M136.3 339.7 H198.5 L226.7 313.2 L247.3 291.6 L283.9 334 L267.2 349.2 L264.6 352.5 V496 M226.7 313.2 L267.2 349.2 M136.3 389.3 H264.6 M136.3 398.6 L141.3 402.8 H264.6 M141.3 402.8 V496 M283.9 178.5 V496 M247.3 212.5 V291.6 M397.6 143 V462" fill="none" stroke="#f2f2f2" stroke-width="1.3"/><path d="M247.3 291.6 H454.5 M283.9 333.8 H420.5" fill="none" stroke="#d6d6d6" stroke-width="1.3"/><line x1="136.3" y1="148.6" x2="397.6" y2="148.6" stroke="#d6d6d6" stroke-width="1.2"/><path d="M137 148.6 L144.5 147.0 Q146 148.6 144.5 150.2 Z" fill="#f4f4f4" stroke="#f4f4f4" stroke-width="0.6"/><path d="M397.0 148.6 L389.5 147.0 Q388.0 148.6 389.5 150.2 Z" fill="#f4f4f4" stroke="#f4f4f4" stroke-width="0.6"/><line x1="136.3" y1="182.9" x2="283.9" y2="182.9" stroke="#d6d6d6" stroke-width="1.2"/><path d="M137 182.9 L144.5 181.3 Q146 182.9 144.5 184.5 Z" fill="#f4f4f4" stroke="#f4f4f4" stroke-width="0.6"/><path d="M283.29999999999995 182.9 L275.79999999999995 181.3 Q274.29999999999995 182.9 275.79999999999995 184.5 Z" fill="#f4f4f4" stroke="#f4f4f4" stroke-width="0.6"/><line x1="136.3" y1="217.8" x2="247.3" y2="217.8" stroke="#d6d6d6" stroke-width="1.2"/><path d="M137 217.8 L144.5 216.20000000000002 Q146 217.8 144.5 219.4 Z" fill="#f4f4f4" stroke="#f4f4f4" stroke-width="0.6"/><path d="M246.70000000000002 217.8 L239.20000000000002 216.20000000000002 Q237.70000000000002 217.8 239.20000000000002 219.4 Z" fill="#f4f4f4" stroke="#f4f4f4" stroke-width="0.6"/><line x1="415" y1="334" x2="415" y2="496" stroke="#d6d6d6" stroke-width="1.2"/><path d="M415 335 L413.4 342.5 Q415 344 416.6 342.5 Z" fill="#f4f4f4" stroke="#f4f4f4" stroke-width="0.6"/><line x1="449.5" y1="292" x2="449.5" y2="496" stroke="#d6d6d6" stroke-width="1.2"/><path d="M449.5 293 L447.9 300.5 Q449.5 302 451.1 300.5 Z" fill="#f4f4f4" stroke="#f4f4f4" stroke-width="0.6"/><line x1="127" y1="435.6" x2="150" y2="435.6" stroke="#d6d6d6" stroke-width="1.2"/><path d="M135 435.6 L129 434 Q127 435.6 129 437.2 Z M142 435.6 L148 434 Q150 435.6 148 437.2 Z" fill="#f4f4f4" stroke="#f4f4f4" stroke-width="0.6"/><g transform="translate(256.2 144.8) rotate(0) scale(0.9600)" fill="none" stroke="#dcdcdc" stroke-width="1.198" stroke-linecap="round" stroke-linejoin="round"><path transform="translate(0.00 -10)" d="M0 0 H6 L2.2 10"/><path transform="translate(7.40 -10)" d="M5.6 0 H0.9 L0.5 4.6 Q1.6 4 3 4 Q6 4 6 7 Q6 10 3 10 Q1.2 10 0.2 8.9"/></g><g transform="translate(269.4 140.8) rotate(0) scale(0.5200)" fill="none" stroke="#dcdcdc" stroke-width="2.115" stroke-linecap="round" stroke-linejoin="round"><path transform="translate(0.00 -10)" d="M3 0 Q0 0 0 3.5 V6.5 Q0 10 3 10 Q6 10 6 6.5 V3.5 Q6 0 3 0Z"/></g><g transform="translate(269.4 145.2) rotate(0) scale(0.3900)" fill="none" stroke="#dcdcdc" stroke-width="2.821" stroke-linecap="round" stroke-linejoin="round"><path transform="translate(0.00 -10)" d="M3 0 Q0 0 0 3.5 V6.5 Q0 10 3 10 Q6 10 6 6.5 V3.5 Q6 0 3 0Z"/><path transform="translate(7.40 -10)" d="M0.4 9.3 H1.4 V10 H0.4Z"/><path transform="translate(11.00 -10)" d="M3 0 Q0 0 0 3.5 V6.5 Q0 10 3 10 Q6 10 6 6.5 V3.5 Q6 0 3 0Z"/><path transform="translate(18.40 -10)" d="M5.6 0 H0.9 L0.5 4.6 Q1.6 4 3 4 Q6 4 6 7 Q6 10 3 10 Q1.2 10 0.2 8.9"/></g><g transform="translate(210.5 180.0) rotate(0) scale(0.9400)" fill="none" stroke="#dcdcdc" stroke-width="1.223" stroke-linecap="round" stroke-linejoin="round"><path transform="translate(-15.90 -10)" d="M4.6 10 V0 L0 7 H6.4"/><path transform="translate(-8.50 -10)" d="M0.2 2.6 Q0.6 0 3 0 Q6 0 6 2.8 Q6 4.6 4.2 6.2 L0 10 H6.2"/><path transform="translate(-1.10 -10)" d="M0.4 9.3 H1.4 V10 H0.4Z"/><path transform="translate(2.50 -10)" d="M4.6 10 V0 L0 7 H6.4"/><path transform="translate(9.90 -10)" d="M0.4 1.2 Q1.4 0 3 0 Q5.8 0 5.8 2.6 Q5.8 5 2.6 5 Q6 5 6 7.5 Q6 10 3 10 Q1.2 10 0.2 8.8"/></g><g transform="translate(192.3 214.9) rotate(0) scale(0.9400)" fill="none" stroke="#dcdcdc" stroke-width="1.223" stroke-linecap="round" stroke-linejoin="round"><path transform="translate(-25.50 -10)" d="M0.4 1.2 Q1.4 0 3 0 Q5.8 0 5.8 2.6 Q5.8 5 2.6 5 Q6 5 6 7.5 Q6 10 3 10 Q1.2 10 0.2 8.8"/><path transform="translate(-18.10 -10)" d="M0.2 2.2 L2.6 0 V10"/><path transform="translate(-13.10 -10)" d="M0.4 9.3 H1.4 V10 H0.4Z"/><path transform="translate(-9.50 -10)" d="M3 4.8 Q0.4 4.8 0.4 2.4 Q0.4 0 3 0 Q5.6 0 5.6 2.4 Q5.6 4.8 3 4.8 Q0 4.8 0 7.4 Q0 10 3 10 Q6 10 6 7.4 Q6 4.8 3 4.8Z"/><path transform="translate(-2.10 -10)" d="M0.4 1.2 Q1.4 0 3 0 Q5.8 0 5.8 2.6 Q5.8 5 2.6 5 Q6 5 6 7.5 Q6 10 3 10 Q1.2 10 0.2 8.8"/><path transform="translate(5.30 -10)" d="M2.9 2.2 V7.4 M0.3 4.8 H5.5 M0.3 10 H5.5"/><path transform="translate(11.90 -10)" d="M3 0 Q0 0 0 3.5 V6.5 Q0 10 3 10 Q6 10 6 6.5 V3.5 Q6 0 3 0Z"/><path transform="translate(19.30 -10)" d="M0.4 9.3 H1.4 V10 H0.4Z"/><path transform="translate(22.90 -10)" d="M0.2 2.2 L2.6 0 V10"/></g><g transform="translate(138.7 432.6) rotate(0) scale(0.9400)" fill="none" stroke="#dcdcdc" stroke-width="1.223" stroke-linecap="round" stroke-linejoin="round"><path transform="translate(-20.50 -10)" d="M0.2 2.2 L2.6 0 V10"/><path transform="translate(-15.50 -10)" d="M0.4 9.3 H1.4 V10 H0.4Z"/><path transform="translate(-11.90 -10)" d="M5.6 0 H0.9 L0.5 4.6 Q1.6 4 3 4 Q6 4 6 7 Q6 10 3 10 Q1.2 10 0.2 8.9"/><path transform="translate(-4.50 -10)" d="M0 3.8 L5.2 10 M5.2 3.8 L0 10"/><path transform="translate(2.10 -10)" d="M4.6 10 V0 L0 7 H6.4"/><path transform="translate(9.50 -10)" d="M5.6 0 H0.9 L0.5 4.6 Q1.6 4 3 4 Q6 4 6 7 Q6 10 3 10 Q1.2 10 0.2 8.9"/><path transform="translate(16.90 -10)" d="M2 0 Q3.6 0 3.6 1.6 Q3.6 3.2 2 3.2 Q0.4 3.2 0.4 1.6 Q0.4 0 2 0Z"/></g><g transform="translate(412.3 462) rotate(-90) scale(0.9400)" fill="none" stroke="#dcdcdc" stroke-width="1.223" stroke-linecap="round" stroke-linejoin="round"><path transform="translate(-20.20 -10)" d="M3.3 0 V10 M3.3 2.2 Q0 2.2 0 6 Q0 9.6 3.3 9.6 Q6.6 9.6 6.6 6 Q6.6 2.2 3.3 2.2Z"/><path transform="translate(-12.00 -10)" d="M0 0 H6 L2.2 10"/><path transform="translate(-4.60 -10)" d="M0.4 1.2 Q1.4 0 3 0 Q5.8 0 5.8 2.6 Q5.8 5 2.6 5 Q6 5 6 7.5 Q6 10 3 10 Q1.2 10 0.2 8.8"/><path transform="translate(2.80 -10)" d="M0.4 9.3 H1.4 V10 H0.4Z"/><path transform="translate(6.40 -10)" d="M5.4 0.9 Q4.5 0 3 0 Q0 0 0 5 V6.8 Q0 10 3 10 Q6 10 6 7 Q6 4.2 3 4.2 Q0.2 4.2 0 6.5"/><path transform="translate(13.80 -10)" d="M4.6 10 V0 L0 7 H6.4"/></g><g transform="translate(446.5 461.5) rotate(-90) scale(0.9400)" fill="none" stroke="#dcdcdc" stroke-width="1.223" stroke-linecap="round" stroke-linejoin="round"><path transform="translate(-30.45 -10)" d="M3.3 0 V10 M3.3 2.2 Q0 2.2 0 6 Q0 9.6 3.3 9.6 Q6.6 9.6 6.6 6 Q6.6 2.2 3.3 2.2Z"/><path transform="translate(-22.25 -10)" d="M6 3.2 Q6 5.8 3 5.8 Q0 5.8 0 3 Q0 0 3 0 Q6 0 6 3.2 V5 Q6 10 3 10 Q1.5 10 0.6 9.1"/><path transform="translate(-14.85 -10)" d="M0 0 H6 L2.2 10"/><path transform="translate(-7.45 -10)" d="M0.4 9.3 H1.4 V10 H0.4Z"/><path transform="translate(-3.85 -10)" d="M5.4 0.9 Q4.5 0 3 0 Q0 0 0 5 V6.8 Q0 10 3 10 Q6 10 6 7 Q6 4.2 3 4.2 Q0.2 4.2 0 6.5"/><path transform="translate(3.55 -10)" d="M5.4 0.9 Q4.5 0 3 0 Q0 0 0 5 V6.8 Q0 10 3 10 Q6 10 6 7 Q6 4.2 3 4.2 Q0.2 4.2 0 6.5"/><path transform="translate(15.45 -10)" d="M0 0 V10 M0 6.2 Q0.4 4 3 4 Q5.6 4 5.6 6.5 V10"/><path transform="translate(22.85 -10)" d="M0.2 2.2 L2.6 0 V10"/><path transform="translate(27.85 -10)" d="M0.2 2.2 L2.6 0 V10"/></g><g transform="translate(207.5 277.2) rotate(0) scale(0.9200)" fill="none" stroke="#dcdcdc" stroke-width="1.250" stroke-linecap="round" stroke-linejoin="round"><path transform="translate(-7.00 -10)" d="M0 10 V0 L6 10 V0"/><path transform="translate(1.00 -10)" d="M5.4 0.9 Q4.5 0 3 0 Q0 0 0 5 V6.8 Q0 10 3 10 Q6 10 6 7 Q6 4.2 3 4.2 Q0.2 4.2 0 6.5"/></g><path d="M203.5 278.3 H214.3 L219.5 268 M203.5 278.3 L208.3 287.3 L213.3 278.3" fill="none" stroke="#d6d6d6" stroke-width="1"/><g transform="translate(126 369.8) rotate(-90) scale(0.9200)" fill="none" stroke="#dcdcdc" stroke-width="1.250" stroke-linecap="round" stroke-linejoin="round"><path transform="translate(-7.00 -10)" d="M0 10 V0 L6 10 V0"/><path transform="translate(1.00 -10)" d="M5.4 0.9 Q4.5 0 3 0 Q0 0 0 5 V6.8 Q0 10 3 10 Q6 10 6 7 Q6 4.2 3 4.2 Q0.2 4.2 0 6.5"/></g><path d="M127 375 V364.5 L116.2 358.5 M127 375 L135.8 370 L127 365" fill="none" stroke="#d6d6d6" stroke-width="1"/><circle cx="135.4" cy="333.2" r="3.4" fill="#1414b4"/><circle cx="135.4" cy="333.2" r="2.2" fill="#1a1ad0"/><rect x="135.9" y="336.9" width="1" height="1" fill="#ccc"/></g></svg>
<div class="a" style="left:518px;top:80px;width:177px;height:15px;background:linear-gradient(#dedede,#d4d4d4);border-top:1px solid #c8c8c8"></div>
<div class="t" style="left:519px;top:84px;font-size:7.3px;color:#222;-webkit-text-stroke:0.12px #222">Property Editor</div>
<svg class="a" style="left:674px;top:83px" width="20" height="9" viewBox="0 0 20 9"><rect x="1.5" y="3.5" width="4" height="4" fill="#fff" stroke="#222" stroke-width="1"/><path d="M3 1.2 H6.8 V5" fill="none" stroke="#222" stroke-width="1.4"/><path d="M12.3 1.8 L16.7 6.6 M16.7 1.8 L12.3 6.6" stroke="#222" stroke-width="1.2"/></svg>
<div class="a" style="left:518px;top:95px;width:177px;height:251px;background:#f0f0f0;border:1px solid #a8a8a8"></div>
<div class="a" style="left:683px;top:96px;width:11px;height:249px;background:#f4f4f4;border-left:1px solid #e4e4e4"></div>
<div class="a" style="left:686px;top:99px;width:0;height:0;border-left:2.5px solid transparent;border-right:2.5px solid transparent;border-bottom:3px solid #444"></div>
<div class="a" style="left:686px;top:337px;width:0;height:0;border-left:2.5px solid transparent;border-right:2.5px solid transparent;border-top:3px solid #444"></div>
<div class="a" style="left:684px;top:107px;width:10px;height:173px;border:1px solid #b4b4b4;border-radius:2px;background:linear-gradient(90deg,#f2f2f2,#d8d8d8)"></div>
<div class="a" style="left:686px;top:188px;width:5px;height:5px;background:repeating-linear-gradient(#666 0 1px,transparent 1px 2px)"></div>
<div class="lbl" style="left:525px;top:105px">Selection:</div>
<div class="cb" style="left:560px;top:102px;width:117px;height:13px"><b style="top:4px;right:4px"></b></div>
<div class="lbl" style="left:563px;top:105px;color:#111">Line (1)</div>
<div class="a" style="left:526px;top:124px;width:151px;height:101px;border:1px solid #dadada;border-radius:2px"></div>
<div class="lbl" style="left:529px;top:120.5px;background:#f0f0f0;padding:0 2px;font-size:7.2px;color:#333">General</div>
<div class="lbl" style="left:500px;width:71px;text-align:right;top:136.3px;color:#1a1a1a">Layer:</div>
<div class="lbl" style="left:500px;width:71px;text-align:right;top:151.2px;color:#1a1a1a">Color:</div>
<div class="lbl" style="left:500px;width:71px;text-align:right;top:168.0px;color:#1a1a1a">Lineweight:</div>
<div class="lbl" style="left:500px;width:71px;text-align:right;top:184.3px;color:#1a1a1a">Linetype:</div>
<div class="lbl" style="left:500px;width:71px;text-align:right;top:199.7px;color:#1a1a1a">Draw Order:</div>
<div class="lbl" style="left:500px;width:71px;text-align:right;top:214.6px;color:#1a1a1a">Handle:</div>
<div class="cb" style="left:576px;top:132px;width:77px;height:14px"><b></b></div>
<div class="lbl" style="left:578px;top:136px;color:#111">construction</div>
<div class="t" style="left:659px;top:134px;font-size:10px;font-weight:bold;color:#c02020">+</div>
<div class="cb" style="left:576px;top:147px;width:94px;height:15px"><b></b></div>
<div class="a" style="left:579px;top:151.5px;width:22px;height:7px;background:#fff;border:1px solid #555;border-radius:1px"></div>
<div class="lbl" style="left:603px;top:151px;color:#111">By Layer</div>
<div class="cb" style="left:576px;top:164px;width:94px;height:14px"><b></b></div>
<div class="a" style="left:580px;top:171px;width:21px;height:1px;background:#222"></div>
<div class="lbl" style="left:603px;top:168px;color:#111">By Layer</div>
<div class="cb" style="left:576px;top:180px;width:94px;height:14px"><b></b></div>
<div class="lbl" style="left:603px;top:184px;color:#111">By Layer</div>
<div class="inp" style="left:576px;top:196px;width:94px;height:15px"></div>
<div class="lbl" style="left:578px;top:200px;color:#111">30</div>
<div class="a" style="left:576px;top:212px;width:94px;height:11px;background:#ececec"></div>
<div class="lbl" style="left:578px;top:214.5px;color:#222">0x70</div>
<div class="a" style="left:526px;top:237px;width:151px;height:120px;border:1px solid #dadada;border-radius:2px"></div>
<div class="lbl" style="left:529px;top:234px;background:#f0f0f0;padding:0 2px;font-size:7.2px;color:#333">Geometry</div>
<div class="lbl" style="left:496px;width:60px;text-align:right;top:252.1px;color:#1a1a1a">Length:</div>
<div class="inp" style="left:561px;top:248.1px;width:109px;height:14px"></div>
<div class="lbl" style="left:563px;top:252.6px;color:#111">120</div>
<div class="lbl" style="left:496px;width:60px;text-align:right;top:268.3px;color:#1a1a1a">Angle:</div>
<div class="inp" style="left:561px;top:264.3px;width:109px;height:14px"></div>
<div class="lbl" style="left:563px;top:268.8px;color:#111">0</div>
<div class="lbl" style="left:496px;width:60px;text-align:right;top:296.3px;color:#1a1a1a">X:</div>
<div class="inp" style="left:561px;top:292.3px;width:109px;height:14px"></div>
<div class="lbl" style="left:563px;top:296.8px;color:#111">0</div>
<div class="lbl" style="left:496px;width:60px;text-align:right;top:311.6px;color:#1a1a1a">Y:</div>
<div class="inp" style="left:561px;top:307.6px;width:109px;height:14px"></div>
<div class="lbl" style="left:563px;top:312.1px;color:#111">36.82</div>
<div class="lbl" style="left:496px;width:60px;text-align:right;top:339.1px;color:#1a1a1a">X:</div>
<div class="inp" style="left:561px;top:335.1px;width:109px;height:14px"></div>
<div class="lbl" style="left:563px;top:339.6px;color:#111">120</div>
<div class="lbl" style="left:532px;top:281.5px;font-weight:bold;font-size:7.9px;color:#222">Start Point</div>
<div class="lbl" style="left:532px;top:325.8px;font-weight:bold;font-size:7.9px;color:#222">End Point</div>
<div class="a" style="left:519px;top:345px;width:175px;height:1px;background:#a8a8a8"></div>
<div class="a" style="left:518px;top:346px;width:177px;height:4px;background:#f0f0f0"></div>
<div class="a" style="left:518px;top:350px;width:177px;height:12px;background:linear-gradient(#dedede,#d4d4d4)"></div>
<div class="t" style="left:519px;top:352.5px;font-size:7.3px;color:#222;-webkit-text-stroke:0.12px #222">Layer List</div>
<svg class="a" style="left:674px;top:352px" width="20" height="9" viewBox="0 0 20 9"><rect x="1.5" y="3.5" width="4" height="4" fill="#fff" stroke="#222" stroke-width="1"/><path d="M3 1.2 H6.8 V5" fill="none" stroke="#222" stroke-width="1.4"/><path d="M12.3 1.8 L16.7 6.6 M16.7 1.8 L12.3 6.6" stroke="#222" stroke-width="1.2"/></svg>
<div class="a" style="left:519px;top:363px;width:33px;height:14px;border:1px solid #a8a8a8;border-radius:2px;background:linear-gradient(#f8f8f8,#e4e4e4 55%,#dadada)"></div>
<svg class="a" style="left:519px;top:363px" width="33" height="14" viewBox="0 0 33 14"><path d="M10.5 7.3 Q15.5 0.5 22.5 6.7 Q17.5 13.5 10.5 7.3Z" fill="#111"/><ellipse cx="16.5" cy="7" rx="2.6" ry="2.2" fill="#fff"/><circle cx="16.8" cy="7.2" r="1.4" fill="#111"/></svg>
<div class="a" style="left:555px;top:363px;width:33px;height:14px;border:1px solid #a8a8a8;border-radius:2px;background:linear-gradient(#f8f8f8,#e4e4e4 55%,#dadada)"></div>
<svg class="a" style="left:555px;top:363px" width="33" height="14" viewBox="0 0 33 14"><path d="M10.5 7.3 Q15.5 0.5 22.5 6.7 Q17.5 13.5 10.5 7.3Z" fill="#b8b8b8"/><ellipse cx="16.5" cy="7" rx="2.6" ry="2.2" fill="#fff"/><circle cx="16.8" cy="7.2" r="1.4" fill="#b8b8b8"/></svg>
<div class="a" style="left:590px;top:363px;width:33px;height:14px;border:1px solid #a8a8a8;border-radius:2px;background:linear-gradient(#f8f8f8,#e4e4e4 55%,#dadada)"></div>
<svg class="a" style="left:590px;top:363px" width="33" height="14" viewBox="0 0 33 14"><path d="M16.5 3 V11 M12.5 7 H20.5" stroke="#c81818" stroke-width="2"/></svg>
<div class="a" style="left:625px;top:363px;width:34px;height:14px;border:1px solid #e0e0e0;border-radius:2px;background:#fbfbfb"></div>
<svg class="a" style="left:625px;top:363px" width="34" height="14" viewBox="0 0 34 14"><path d="M13 7 H21" stroke="#666" stroke-width="1.6"/></svg>
<div class="a" style="left:660px;top:363px;width:34px;height:14px;border:1px solid #a8a8a8;border-radius:2px;background:linear-gradient(#f8f8f8,#e4e4e4 55%,#dadada)"></div>
<svg class="a" style="left:660px;top:363px" width="34" height="14" viewBox="0 0 34 14"><path d="M12 12 L13 9 L20 2 L22 4 L15 11Z" fill="#e8a030" stroke="#a06010" stroke-width="0.5"/><path d="M12 12 L13 9 L15 11Z" fill="#f0d8b0"/></svg>
<div class="a" style="left:518px;top:378px;width:177px;height:131px;background:#fff;border:1px solid #a8a8a8"></div>
<div class="a" style="left:519px;top:379px;width:175px;height:12.5px;background:linear-gradient(#f2f2f2,#e4e4e4)"></div>
<svg class="a" style="left:519px;top:379.4px" width="28" height="12" viewBox="0 0 28 12"><path d="M1.5 6.3 Q6.5 -0.5 13.5 5.7 Q8.5 12.5 1.5 6.3Z" fill="#2a4a6a"/><ellipse cx="7.5" cy="6" rx="2.6" ry="2.2" fill="#fff"/><circle cx="7.8" cy="6.2" r="1.4" fill="#2a4a6a"/><rect x="15" y="5.2" width="7" height="6.3" rx="0.8" fill="#8aa0b8"/><path d="M16.5 5.5 V3.2 A2 2 0 0 1 20.5 3.2 V5.5" fill="none" stroke="#8aa0b8" stroke-width="1.1"/></svg>
<div class="lbl" style="left:548px;top:381.6px;font-size:7.9px;color:#1a1a1a;-webkit-text-stroke:0">0</div>
<svg class="a" style="left:519px;top:391.6px" width="28" height="12" viewBox="0 0 28 12"><path d="M1.5 6.3 Q6.5 -0.5 13.5 5.7 Q8.5 12.5 1.5 6.3Z" fill="#111"/><ellipse cx="7.5" cy="6" rx="2.6" ry="2.2" fill="#fff"/><circle cx="7.8" cy="6.2" r="1.4" fill="#111"/><rect x="15" y="5.2" width="7" height="6.3" rx="0.8" fill="#a8a8a8"/><path d="M16.5 5.5 V3.2 A2 2 0 0 1 20.5 3.2 V5.5" fill="none" stroke="#a8a8a8" stroke-width="1.1"/></svg>
<div class="lbl" style="left:548px;top:393.8px;font-size:7.9px;color:#1a1a1a;-webkit-text-stroke:0">axes</div>
<svg class="a" style="left:519px;top:403.8px" width="28" height="12" viewBox="0 0 28 12"><path d="M1.5 6.3 Q6.5 -0.5 13.5 5.7 Q8.5 12.5 1.5 6.3Z" fill="#b0b0b0"/><ellipse cx="7.5" cy="6" rx="2.6" ry="2.2" fill="#fff"/><circle cx="7.8" cy="6.2" r="1.4" fill="#b0b0b0"/><rect x="15" y="5.2" width="7" height="6.3" rx="0.8" fill="#a8a8a8"/><path d="M16.5 5.5 V3.2 A2 2 0 0 1 20.5 3.2 V5.5" fill="none" stroke="#a8a8a8" stroke-width="1.1"/></svg>
<div class="lbl" style="left:548px;top:406.0px;font-size:7.9px;color:#1a1a1a;-webkit-text-stroke:0">construction</div>
<svg class="a" style="left:519px;top:416.0px" width="28" height="12" viewBox="0 0 28 12"><path d="M1.5 6.3 Q6.5 -0.5 13.5 5.7 Q8.5 12.5 1.5 6.3Z" fill="#111"/><ellipse cx="7.5" cy="6" rx="2.6" ry="2.2" fill="#fff"/><circle cx="7.8" cy="6.2" r="1.4" fill="#111"/><rect x="15" y="5.2" width="7" height="6.3" rx="0.8" fill="#a8a8a8"/><path d="M16.5 5.5 V3.2 A2 2 0 0 1 20.5 3.2 V5.5" fill="none" stroke="#a8a8a8" stroke-width="1.1"/></svg>
<div class="lbl" style="left:548px;top:418.2px;font-size:7.9px;color:#1a1a1a;-webkit-text-stroke:0">contour</div>
<svg class="a" style="left:519px;top:428.2px" width="28" height="12" viewBox="0 0 28 12"><path d="M1.5 6.3 Q6.5 -0.5 13.5 5.7 Q8.5 12.5 1.5 6.3Z" fill="#111"/><ellipse cx="7.5" cy="6" rx="2.6" ry="2.2" fill="#fff"/><circle cx="7.8" cy="6.2" r="1.4" fill="#111"/><rect x="15" y="5.2" width="7" height="6.3" rx="0.8" fill="#a8a8a8"/><path d="M16.5 5.5 V3.2 A2 2 0 0 1 20.5 3.2 V5.5" fill="none" stroke="#a8a8a8" stroke-width="1.1"/></svg>
<div class="lbl" style="left:548px;top:430.4px;font-size:7.9px;color:#1a1a1a;-webkit-text-stroke:0">dim</div>
<svg class="a" style="left:519px;top:440.4px" width="28" height="12" viewBox="0 0 28 12"><path d="M1.5 6.3 Q6.5 -0.5 13.5 5.7 Q8.5 12.5 1.5 6.3Z" fill="#111"/><ellipse cx="7.5" cy="6" rx="2.6" ry="2.2" fill="#fff"/><circle cx="7.8" cy="6.2" r="1.4" fill="#111"/><rect x="15" y="5.2" width="7" height="6.3" rx="0.8" fill="#a8a8a8"/><path d="M16.5 5.5 V3.2 A2 2 0 0 1 20.5 3.2 V5.5" fill="none" stroke="#a8a8a8" stroke-width="1.1"/></svg>
<div class="lbl" style="left:548px;top:442.6px;font-size:7.9px;color:#1a1a1a;-webkit-text-stroke:0">hatch</div>
<svg class="a" style="left:519px;top:452.6px" width="28" height="12" viewBox="0 0 28 12"><path d="M1.5 6.3 Q6.5 -0.5 13.5 5.7 Q8.5 12.5 1.5 6.3Z" fill="#111"/><ellipse cx="7.5" cy="6" rx="2.6" ry="2.2" fill="#fff"/><circle cx="7.8" cy="6.2" r="1.4" fill="#111"/><rect x="15" y="5.2" width="7" height="6.3" rx="0.8" fill="#a8a8a8"/><path d="M16.5 5.5 V3.2 A2 2 0 0 1 20.5 3.2 V5.5" fill="none" stroke="#a8a8a8" stroke-width="1.1"/></svg>
<div class="lbl" style="left:548px;top:454.8px;font-size:7.9px;color:#1a1a1a;-webkit-text-stroke:0">hatch_border</div>
<div class="a" style="left:5px;top:509px;width:690px;height:27px;background:#fff;border-bottom:1px solid #b4b4b4;border-top:1px solid #e8e8e8"></div>
<div class="a" style="left:683px;top:510px;width:11px;height:25px;background:#f2f2f2"></div>
<div class="a" style="left:686px;top:515px;width:0;height:0;border-left:2.5px solid transparent;border-right:2.5px solid transparent;border-bottom:3px solid #333"></div>
<div class="a" style="left:686px;top:528px;width:0;height:0;border-left:2.5px solid transparent;border-right:2.5px solid transparent;border-top:3px solid #333"></div>
<div class="a" style="left:5px;top:510px;width:678px;height:25px;overflow:hidden"><div class="lbl" style="left:4px;top:-1.1px;font-size:7.15px;color:#4338a8"><i>Command:</i> snapauto</div><div class="lbl" style="left:4px;top:7.7px;font-size:7.15px;color:#4338a8"><i>Command:</i> snapauto</div><div class="lbl" style="left:4px;top:16.3px;font-size:7.15px;color:#4338a8"><i>Command:</i> linemenu</div></div>
<div class="a" style="left:5px;top:536px;width:690px;height:15px;background:#fff"></div>
<div class="lbl" style="left:6px;top:540.5px;font-size:7.2px;color:#222">Command:</div>
<div class="a" style="left:5px;top:551px;width:690px;height:26px;background:#f0f0f0;border-top:1px solid #a0a0a0"></div>
<div class="a" style="left:109px;top:553px;width:1px;height:23px;background:#cfcfcf"></div>
<div class="a" style="left:213px;top:553px;width:1px;height:23px;background:#cfcfcf"></div>
<div class="a" style="left:389px;top:553px;width:1px;height:23px;background:#cfcfcf"></div>
<div class="a" style="left:522px;top:553px;width:1px;height:23px;background:#cfcfcf"></div>
<div class="a" style="left:612px;top:553px;width:1px;height:23px;background:#cfcfcf"></div>
<div class="lbl" style="left:6.5px;top:555px;font-size:7.3px;color:#222">55.6638,36.4368</div>
<div class="lbl" style="left:7px;top:566px;font-size:7.3px;color:#222">-</div>
<div class="lbl" style="left:111px;top:555px;font-size:7.3px;color:#222">66.529&lt;33.2083</div>
<div class="lbl" style="left:112px;top:566px;font-size:7.3px;color:#222">-</div>
<div class="lbl" style="left:200px;width:88px;text-align:right;top:557px;font-size:5.9px;color:#222;-webkit-text-stroke:0">Select entity or region</div>
<div class="lbl" style="left:200px;width:88px;text-align:right;top:565px;font-size:5.9px;color:#222;-webkit-text-stroke:0">Move entity or reference</div>
<svg class="a" style="left:292px;top:552px" width="21" height="24" viewBox="0 0 21 24"><path d="M4 6 Q6 2 10 2.5 Q16 3.5 18 12 Q19.5 19 14 21.5 Q8 23.5 5 18 Q2 12 4 6Z" fill="#fbfbfb" stroke="#a4a4a4" stroke-width="0.9"/><ellipse cx="9" cy="8.5" rx="3.8" ry="3.2" fill="#dbe8f2"/><ellipse cx="9" cy="8.8" rx="1.4" ry="1.8" fill="#4f6f8a"/><circle cx="6" cy="2.5" r="1.2" fill="#777"/></svg>
<div class="lbl" style="left:393px;top:557px;font-size:5.9px;color:#222;-webkit-text-stroke:0">Selected entities:</div>
<div class="lbl" style="left:393px;top:565px;font-size:5.9px;color:#222;-webkit-text-stroke:0">1 Line on Layer "construction".</div>
<div class="a" style="left:690px;top:568px;width:1.5px;height:1.5px;background:#b0b0b0;box-shadow:0.7px 0.7px 0 #fff"></div>
<div class="a" style="left:690px;top:571px;width:1.5px;height:1.5px;background:#b0b0b0;box-shadow:0.7px 0.7px 0 #fff"></div>
<div class="a" style="left:687px;top:571px;width:1.5px;height:1.5px;background:#b0b0b0;box-shadow:0.7px 0.7px 0 #fff"></div>
<div class="a" style="left:690px;top:574px;width:1.5px;height:1.5px;background:#b0b0b0;box-shadow:0.7px 0.7px 0 #fff"></div>
<div class="a" style="left:687px;top:574px;width:1.5px;height:1.5px;background:#b0b0b0;box-shadow:0.7px 0.7px 0 #fff"></div>
<div class="a" style="left:684px;top:574px;width:1.5px;height:1.5px;background:#b0b0b0;box-shadow:0.7px 0.7px 0 #fff"></div>
</body></html>
